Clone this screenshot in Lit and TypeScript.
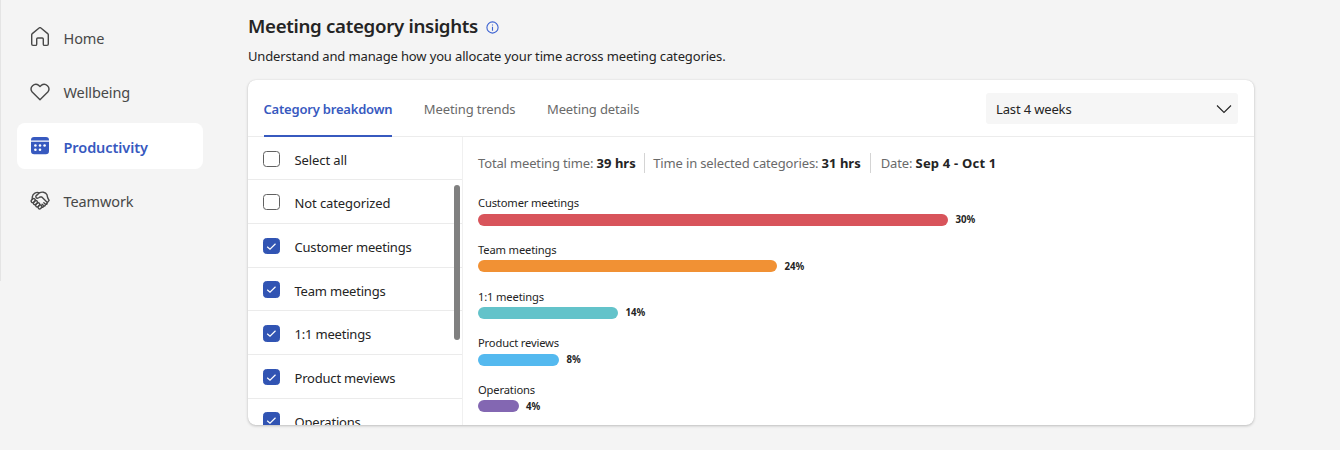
import { LitElement, html, css, svg } from "lit";
import { customElement, state } from "lit/decorators.js";
import { classMap } from "lit/directives/class-map.js";

interface NavItem { id: string; label: string; }
interface Category { label: string; checked: boolean; }
interface Bar { label: string; percent: number; width: number; color: string; }

const NAV: NavItem[] = [
  { id: "home", label: "Home" },
  { id: "heart", label: "Wellbeing" },
  { id: "calendar", label: "Productivity" },
  { id: "handshake", label: "Teamwork" },
];

const CATEGORIES: Category[] = [
  { label: "Select all", checked: false },
  { label: "Not categorized", checked: false },
  { label: "Customer meetings", checked: true },
  { label: "Team meetings", checked: true },
  { label: "1:1 meetings", checked: true },
  { label: "Product meviews", checked: true },
  { label: "Operations", checked: true },
];

const BARS: Bar[] = [
  { label: "Customer meetings", percent: 30, width: 470, color: "#d8545b" },
  { label: "Team meetings", percent: 24, width: 299, color: "#f19134" },
  { label: "1:1 meetings", percent: 14, width: 140, color: "#63c3ca" },
  { label: "Product reviews", percent: 8, width: 81, color: "#54b9ef" },
  { label: "Operations", percent: 4, width: 40.5, color: "#8367b2" },
];

const ICONS: Record<string, unknown> = {
  home: svg`<path d="M10.900 1a1.400 1.400 0 0 0-1.800 0L2.300 6.600c-.4.3-.6.700-.6 1.200v9.300c0 .8.5 1.300 1.300 1.300h2.500c.7 0 1.200-.5 1.200-1.200v-5.100c0-.7.4-1.100 1.100-1.100h4.400c.7 0 1.100.4 1.100 1.100v5.100c0 .7.5 1.200 1.200 1.200H17c.8 0 1.300-.5 1.300-1.300V7.800c0-.5-.2-.9-.6-1.200Z"/>`,
  heart: svg`<path d="M10 17.800 2.200 10a4.700 4.700 0 0 1 6.600-6.600L10 4.600l1.200-1.200a4.700 4.700 0 0 1 6.600 6.600Z"/>`,
  calendar: svg`<path class="solid" d="M1 4.500V3.900a3 3 0 0 1 3-3h12a3 3 0 0 1 3 3v.6ZM1 5.800h18v9.300a3.200 3.200 0 0 1-3.200 3.200H4.200A3.200 3.200 0 0 1 1 15.100Z"/><g class="dots"><circle cx="5.400" cy="9.500" r="1.300"/><circle cx="10" cy="9.500" r="1.300"/><circle cx="14.600" cy="9.500" r="1.300"/><circle cx="5.400" cy="13.800" r="1.300"/><circle cx="10" cy="13.800" r="1.300"/></g>`,
  handshake: svg`<path d="M2.200 8.300 2.300 5.800A5.200 5.200 0 0 1 9.500 1.800M9.500 1.800C11.500.7 15.500.7 17 3.800l.7 3 1.400 2.600-2.500 3.200M9.500 1.800 6.300 4.600c-.9.9-.5 2.300.7 2.600 1.200.3 2.300-.8 3.100-1.300l1.700.1 5 5c1.200 1.200 0 2.900-1.500 2.100l-1.500-1.400M15.300 13.100c.6 1.200-.7 2.400-1.800 1.500l-1.400-1.300M13.500 14.600c.3 1.500-1.100 2.300-2.200 1.400"/><rect x="1" y="8.100" width="4.400" height="3" rx="1.500" transform="rotate(-45 3.200 9.600)"/><rect x="3.100" y="10.200" width="4.600" height="3" rx="1.500" transform="rotate(-45 5.400 11.700)"/><rect x="5.400" y="12.300" width="4.600" height="3" rx="1.500" transform="rotate(-45 7.700 13.800)"/><rect x="7.900" y="14.500" width="4.200" height="3" rx="1.500" transform="rotate(-45 10 16)"/>`,
};

@customElement("app-root")
export class AppRoot extends LitElement {
  @state() private activeNav = "calendar";
  @state() private categories = CATEGORIES;

  static styles = css`
    :host {
      display: block;
      height: 450px;
      overflow: hidden;
      background: #f4f4f4;
      color: #242424;
      font-family: "Noto Sans", "Open Sans", sans-serif;
      font-size: 13px;
    }
    * { box-sizing: border-box; }
    .page { display: grid; grid-template-columns: 248px 1006px; height: 450px; }
    .nav { height: 281px; padding: 14px 45px 0 16px; border-left: 1px solid #e4e4e4; display: flex; flex-direction: column; gap: 8.500px; }
    .nav-item { height: 46px; flex: none; display: flex; align-items: center; gap: 13.500px; padding-left: 13px; border-radius: 8px; font-size: 14.500px; letter-spacing: -0.100px; color: #484848; }
    .nav-item.active { background: #fff; color: #3759bf; font-weight: 600; letter-spacing: -0.080px; }
    .nav-item span { padding-top: 1.400px; }
    .nav-item svg { width: 20px; height: 20px; flex: none; fill: none; stroke: currentColor; stroke-width: 1.400; stroke-linejoin: round; stroke-linecap: round; }
    .nav-item .solid { fill: currentColor; stroke: none; }
    .nav-item .dots { fill: #fff; stroke: none; }
    .title-row { display: flex; align-items: center; gap: 8px; height: 30px; margin-top: 11px; }
    h1 { margin: 0; font-size: 18.700px; line-height: 30px; font-weight: 600; letter-spacing: -0.320px; }
    .info { width: 13px; height: 13px; margin-top: 3px; fill: none; stroke: #3d63d2; stroke-width: 1.100; }
    .subtitle { margin: 5px 0 0; height: 20px; line-height: 20px; letter-spacing: -0.140px; }
    .card { margin-top: 14px; height: 345px; border-radius: 8px; overflow: hidden; background: #fff; box-shadow: 0 1px 3px rgba(0,0,0,.22), 0 0 1px rgba(0,0,0,.12); display: grid; grid-template-rows: 57px 288px; }
    .header { display: flex; align-items: stretch; justify-content: space-between; padding: 0 16px 0 15.500px; border-bottom: 1px solid #ececec; }
    .tabs { display: flex; gap: 31.500px; }
    .tab { line-height: 59px; height: 56.500px; color: #6a6a6a; letter-spacing: -0.120px; }
    .tab.active { font-weight: 600; color: #3759bf; border-bottom: 2px solid #3759bf; letter-spacing: -0.200px; }
    .select { align-self: center; width: 252px; height: 31px; display: flex; align-items: center; justify-content: space-between; background: #f6f6f6; border-radius: 3px; padding: 0 6.500px 0 10px; letter-spacing: -0.150px; }
    .select span { padding-top: 2px; }
    .select svg { width: 16px; height: 10px; margin-top: 2px; fill: none; stroke: #242424; stroke-width: 1.100; }
    .content { display: grid; grid-template-columns: 214.500px 1fr; }
    .list { position: relative; border-right: 1px solid #f0f0f0; overflow: hidden; height: 288px; }
    .row { height: 43.700px; display: flex; align-items: center; gap: 15px; padding-left: 15px; border-bottom: 1px solid #ebebeb; letter-spacing: -0.200px; }
    .row:first-child { height: 43.200px; }
    .row > span:last-child { padding-top: 3.200px; }
    .row:nth-child(-n+2) { letter-spacing: -0.100px; }
    .box { width: 16.500px; height: 16.500px; margin-top: 1.400px; border: 1px solid #616161; border-radius: 3.500px; background: #fff; }
    .box.checked { background: #3154b3; border-color: #3154b3; }
    .box svg { display: block; width: 14.500px; height: 14.500px; fill: none; stroke: #fff; stroke-width: 1.200; }
    .thumb { position: absolute; right: 1.500px; top: 48px; width: 6px; height: 155px; border-radius: 3px; background: #808080; }
    .report { padding: 15px 0 0 15.500px; }
    .summary { display: flex; align-items: center; height: 21px; color: #6a6a6a; letter-spacing: -0.150px; }
    .summary b { color: #242424; letter-spacing: 0.020px; }
    .stat { height: 20px; line-height: 20px; }
    .stat + .stat { border-left: 1px solid #d4d4d4; margin-left: 8.500px; padding-left: 8px; }
    .stat:last-child { padding-left: 9.500px; margin-left: 9.500px; }
    .stat:last-child b { letter-spacing: 0.200px; }
    .bars { padding-top: 22.400px; }
    .bar-row { height: 46.650px; font-size: 11.200px; line-height: 16px; letter-spacing: -0.160px; }
    .track { display: flex; align-items: center; gap: 7.500px; height: 12px; margin-top: 2.200px; }
    .bar { height: 12px; border-radius: 6px; }
    .pct { font-size: 9.700px; font-weight: 700; letter-spacing: -0.100px; padding-top: 1px; }
  `;

  render() {
    return html`<div class="page">
      <nav class="nav">
        ${NAV.map((n) => html`<div class=${classMap({ "nav-item": true, active: n.id === this.activeNav })}><svg viewBox="0 0 20 20">${ICONS[n.id]}</svg><span>${n.label}</span></div>`)}
      </nav>
      <main>
        <div class="title-row"><h1>Meeting category insights</h1>
          <svg class="info" viewBox="0 0 13 13"><circle cx="6.500" cy="6.500" r="5.600"/><path d="M6.500 5.700v4M6.500 3.400v1.200"/></svg></div>
        <p class="subtitle">Understand and manage how you allocate your time across meeting categories.</p>
        <section class="card">
          <div class="header">
            <div class="tabs"><div class="tab active">Category breakdown</div><div class="tab">Meeting trends</div><div class="tab">Meeting details</div></div>
            <div class="select"><span>Last 4 weeks</span><svg viewBox="0 0 16 10"><path d="M1 1.500 8 8.500 15 1.500"/></svg></div>
          </div>
          <div class="content">
            <div class="list">
              ${this.categories.map((c) => html`<div class="row"><span class=${classMap({ box: true, checked: c.checked })}>${c.checked ? html`<svg viewBox="0 0 15 15"><path d="M3.300 8 6.200 10.600 11.900 4.900"/></svg>` : ""}</span><span>${c.label}</span></div>`)}
              <div class="thumb"></div>
            </div>
            <div class="report">
              <div class="summary">
                <span class="stat">Total meeting time: <b>39 hrs</b></span>
                <span class="stat">Time in selected categories: <b>31 hrs</b></span>
                <span class="stat">Date: <b>Sep 4 - Oct 1</b></span>
              </div>
              <div class="bars">
                ${BARS.map((b) => html`<div class="bar-row"><div>${b.label}</div><div class="track"><div class="bar" style="width:${b.width}px;background:${b.color}"></div><span class="pct">${b.percent}%</span></div></div>`)}
              </div>
            </div>
          </div>
        </section>
      </main>
    </div>`;
  }
}
